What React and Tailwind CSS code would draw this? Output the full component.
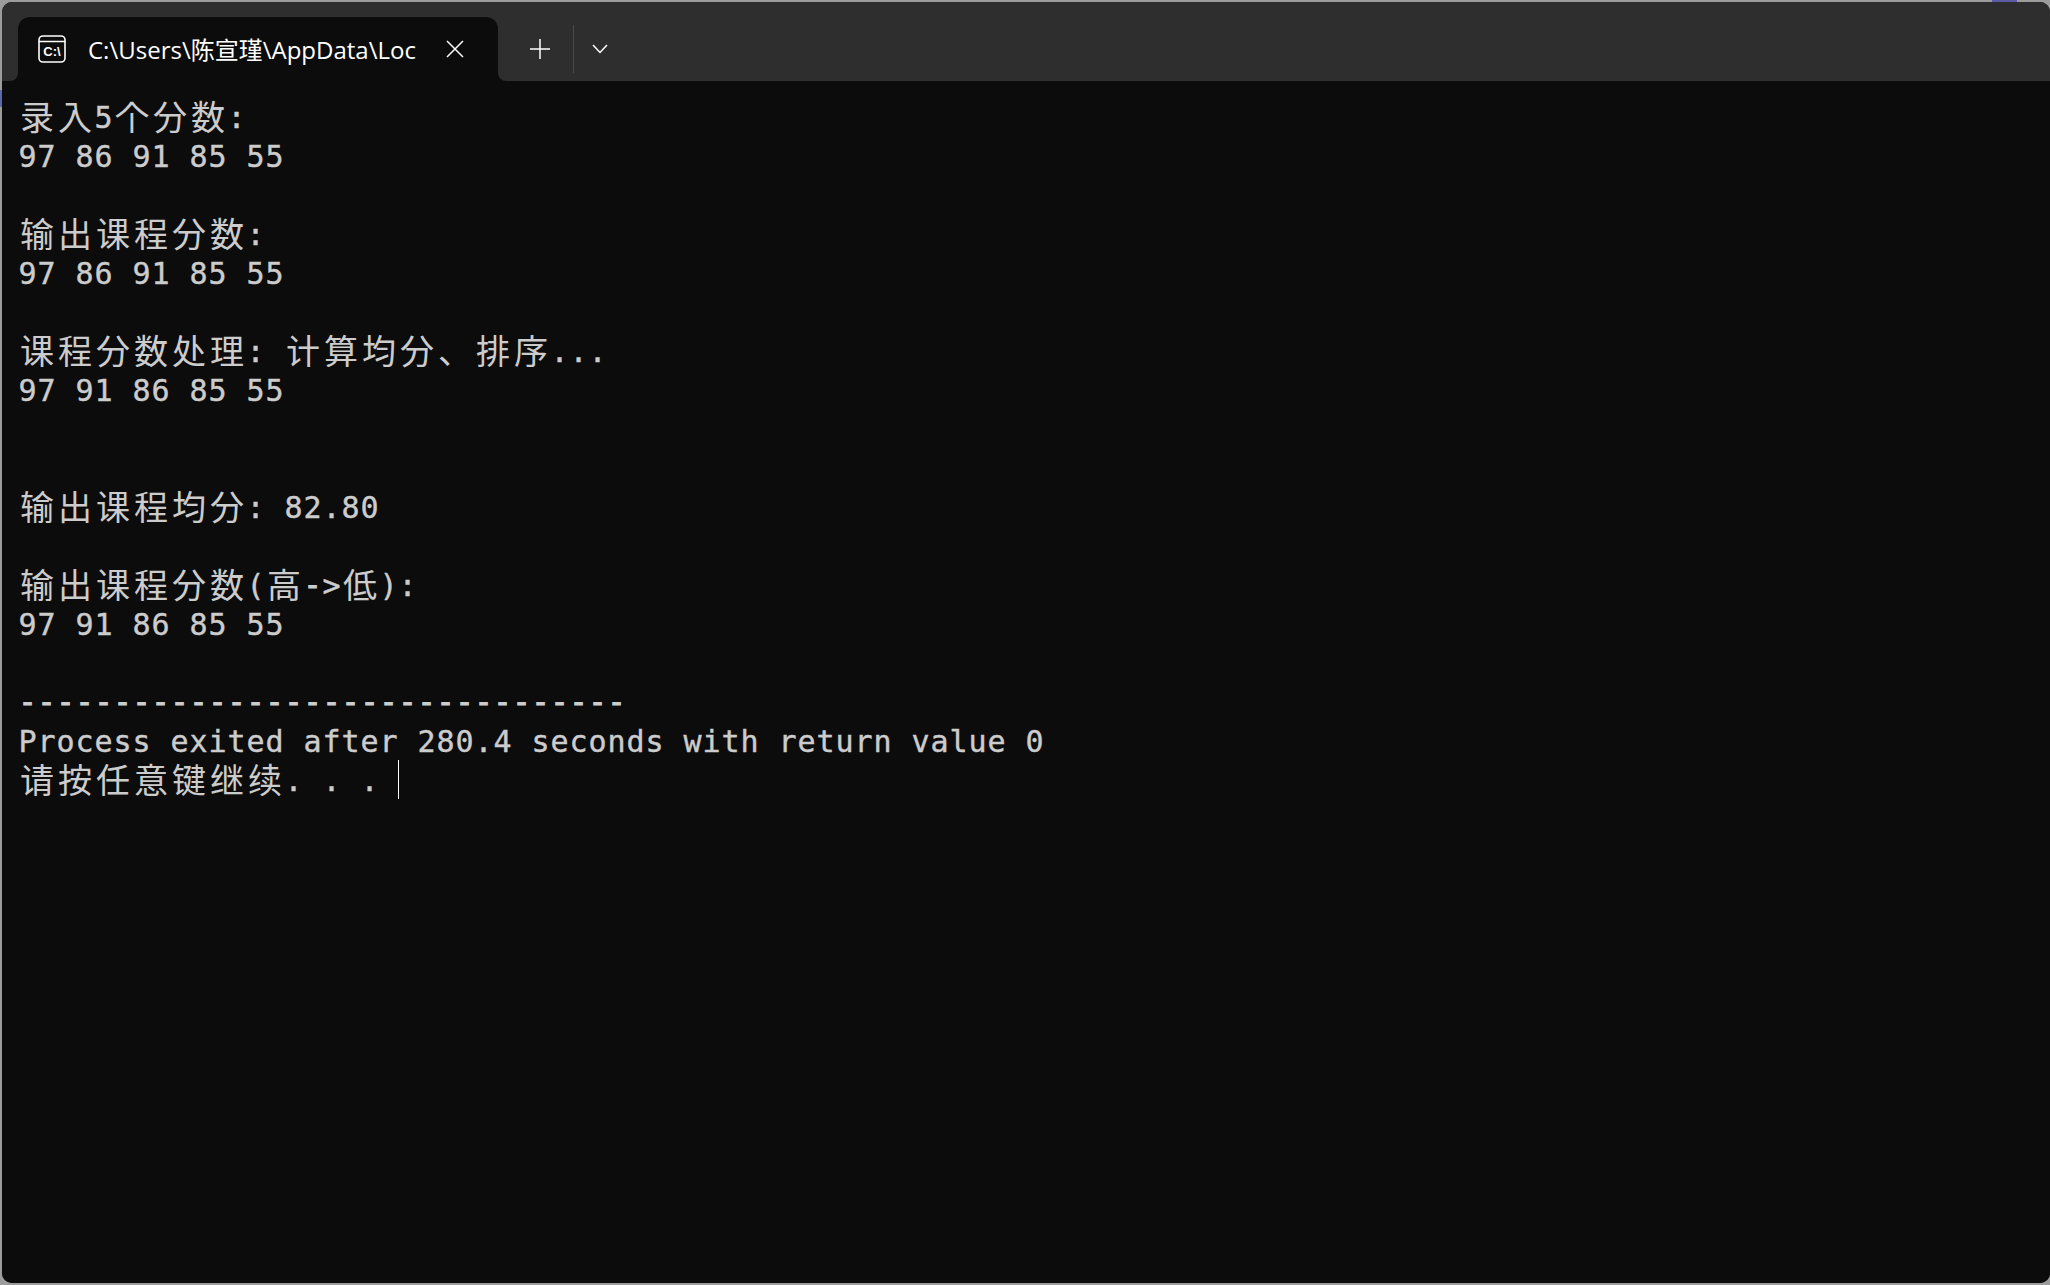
import React from "react";

const lines = [
  "录入5个分数: ",
  "97 86 91 85 55",
  "",
  "输出课程分数: ",
  "97 86 91 85 55",
  "",
  "课程分数处理: 计算均分、排序...",
  "97 91 86 85 55",
  "",
  "",
  "输出课程均分: 82.80",
  "",
  "输出课程分数(高->低):",
  "97 91 86 85 55",
  "",
  "--------------------------------",
  "Process exited after 280.4 seconds with return value 0",
];

// every glyph sits in a console cell: 19px half width, 38px full width
function Cell({ ch }) {
  if (ch.charCodeAt(0) > 255) {
    return (
      <span className="inline-block w-[38px] pb-[2px] text-center text-[34px] leading-[35px] [font-family:'Noto_Sans_CJK_JP',sans-serif]">
        {ch}
      </span>
    );
  }
  if (ch === "-") {
    return <span className="inline-block w-[19px] text-center leading-[37px] [-webkit-text-stroke:1px_#cccccc]">{ch}</span>;
  }
  return <span className="inline-block w-[19px] pt-[1px] text-center leading-[35px] whitespace-pre [-webkit-text-stroke:0.4px_#cccccc]">{ch}</span>;
}

function Line({ text, children }) {
  return (
    <div className="flex h-[39px] items-center whitespace-pre">
      {Array.from(text).map((ch, i) => (
        <Cell key={i} ch={ch} />
      ))}
      {children}
    </div>
  );
}

function TabIcon() {
  return (
    <svg width="28" height="28" viewBox="0 0 28 28" fill="none" className="shrink-0">
      <rect x="1" y="1" width="26" height="26" rx="4" stroke="#fff" strokeWidth="1.6" />
      <path d="M1 6.5H27" stroke="#fff" strokeWidth="1.4" />
      <text x="14" y="21" textAnchor="middle" fontSize="13" fontWeight="700" fill="#fff" fontFamily="Liberation Sans, sans-serif">
        C:\
      </text>
    </svg>
  );
}

function Flare({ side }) {
  return (
    <div className={side === "left" ? "absolute bottom-0 -left-[8px] h-2 w-2 bg-[#0c0c0c]" : "absolute bottom-0 -right-[8px] h-2 w-2 bg-[#0c0c0c]"}>
      <div className={side === "left" ? "h-full w-full rounded-br-lg bg-[#2e2e2e]" : "h-full w-full rounded-bl-lg bg-[#2e2e2e]"} />
    </div>
  );
}

export default function App() {
  return (
    <div className="relative h-[1285px] w-[2050px] overflow-hidden bg-[#9c9c9c] pt-[2px] pb-[2px] pl-[2px]">
      <div className="absolute top-0 left-[1992px] h-[2px] w-[25px] bg-[#5b5ba8]" />
      <div className="absolute top-[90px] left-0 h-[17px] w-[2px] bg-[#5b6ba8]" />
      <div className="flex h-full flex-col overflow-hidden rounded-[10px] bg-[#0c0c0c]">
        <div className="flex h-[79px] shrink-0 items-end bg-[#2e2e2e] pl-[16px]">
          <div className="relative flex h-[64px] w-[480px] items-center rounded-t-xl bg-[#0c0c0c] pl-[20px]">
            <Flare side="left" />
            <Flare side="right" />
            <TabIcon />
            <div className="ml-[22px] w-[328px] pt-[2px] text-[24px] whitespace-nowrap text-white [font-family:'Open_Sans','Noto_Sans_CJK_SC',sans-serif]">
              C:\Users\陈宣瑾\AppData\Loc
            </div>
            <svg width="18" height="18" viewBox="0 0 18 18" className="ml-[30px] shrink-0" stroke="#fff" strokeWidth="1.5">
              <path d="M1 1L17 17M17 1L1 17" />
            </svg>
          </div>
          <div className="flex h-[64px] items-center">
            <svg width="20" height="20" viewBox="0 0 20 20" className="ml-[32px]" stroke="#fff" strokeWidth="1.5">
              <path d="M10 0V20M0 10H20" />
            </svg>
            <div className="ml-[23px] h-[48px] w-px bg-[#4a4a4a]" />
            <svg width="16" height="10" viewBox="0 0 16 10" className="ml-[18px]" stroke="#fff" strokeWidth="1.5" fill="none">
              <path d="M1 1L8 8.5L15 1" />
            </svg>
          </div>
        </div>
        <div className="flex-1 bg-[#0c0c0c] pt-[16px] pl-[16px] text-[30px] leading-[39px] text-[#cccccc] [font-family:'DejaVu_Sans_Mono',monospace]">
          {lines.map((text, i) => (
            <Line key={i} text={text} />
          ))}
          <Line text="请按任意键继续. . . ">
            <span className="h-[39px] w-px bg-white" />
          </Line>
        </div>
      </div>
    </div>
  );
}
